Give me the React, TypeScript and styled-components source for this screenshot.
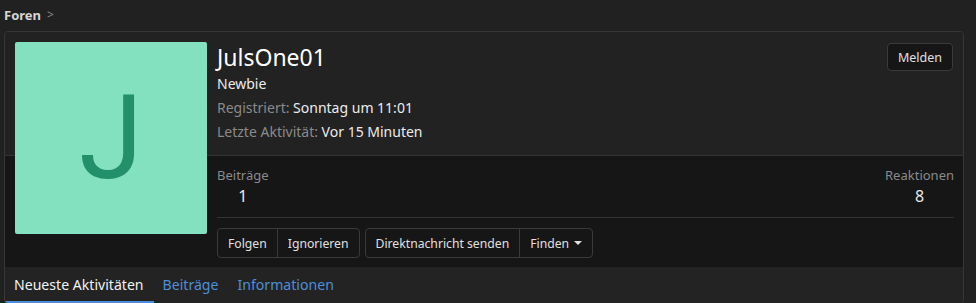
import React from "react";
import styled, { createGlobalStyle } from "styled-components";

const GlobalStyle = createGlobalStyle`
  body {
    margin: 0;
    background-color: #212121;
    font-family: "Noto Sans", "Liberation Sans", sans-serif;
    color: #dcdcdc;
  }
`;

interface Stat {
  label: string;
  value: string;
  align: "left" | "right";
}

const stats: Stat[] = [
  { label: "Beiträge", value: "1", align: "left" },
  { label: "Reaktionen", value: "8", align: "right" },
];

const App: React.FC = () => {
  return (
    <>
      <GlobalStyle />
      <Breadcrumb>
        <Crumb>Foren</Crumb>
        <Chevron>&gt;</Chevron>
      </Breadcrumb>
      <Card>
        <Header>
          <TopBg />
          <BottomBg />
          <Avatar>J</Avatar>
          <TopContent>
            <Info>
              <UserName>JulsOne01</UserName>
              <UserTitle>Newbie</UserTitle>
              <InfoLine>
                <Muted>Registriert:</Muted> Sonntag um 11:01
              </InfoLine>
              <InfoLine>
                <Muted>Letzte Aktivität:</Muted> Vor 15 Minuten
              </InfoLine>
            </Info>
            <ReportButton>Melden</ReportButton>
          </TopContent>
          <BottomContent>
            <StatsRow>
              {stats.map((stat) => (
                <StatBox key={stat.label} $align={stat.align}>
                  <StatLabel>{stat.label}</StatLabel>
                  <StatValue>{stat.value}</StatValue>
                </StatBox>
              ))}
            </StatsRow>
            <Actions>
              <ButtonGroup>
                <GroupButton>Folgen</GroupButton>
                <GroupButton>Ignorieren</GroupButton>
              </ButtonGroup>
              <ButtonGroup>
                <GroupButton>Direktnachricht senden</GroupButton>
                <GroupButton>
                  Finden <Caret />
                </GroupButton>
              </ButtonGroup>
            </Actions>
          </BottomContent>
        </Header>
        <Tabs>
          <Tab $active>Neueste Aktivitäten</Tab>
          <Tab>Beiträge</Tab>
          <Tab>Informationen</Tab>
        </Tabs>
      </Card>
    </>
  );
};

export default App;

const Breadcrumb = styled.div`
  display: flex;
  align-items: center;
  gap: 6px;
  height: 31px;
  padding: 0 4px 2px;
  box-sizing: border-box;
`;

const Crumb = styled.span`
  font-size: 13px;
  font-weight: 700;
  color: #d6d6d6;
`;

const Chevron = styled.span`
  font-size: 12px;
  color: #8a8a8a;
`;

const Card = styled.div`
  margin: 0 12px 0 4px;
  border: 1px solid #363636;
  border-radius: 4px;
  overflow: hidden;
  background-color: #222222;
`;

const Header = styled.div`
  display: grid;
  grid-template-columns: 212px 1fr;
  grid-template-rows: auto auto;
`;

const TopBg = styled.div`
  grid-column: 1 / -1;
  grid-row: 1;
  background-color: #222222;
`;

const BottomBg = styled.div`
  grid-column: 1 / -1;
  grid-row: 2;
  background-color: #161616;
  border-top: 1px solid #333333;
`;

const Avatar = styled.div`
  grid-column: 1;
  grid-row: 1 / 3;
  align-self: start;
  z-index: 1;
  margin: 10px 0 0 10px;
  width: 192px;
  height: 192px;
  border-radius: 2px;
  background-color: #84e1c0;
  color: #22906a;
  font-family: Roboto, "Liberation Sans", sans-serif;
  font-size: 116px;
  line-height: 192px;
  text-align: center;
`;

const TopContent = styled.div`
  grid-column: 2;
  grid-row: 1;
  display: flex;
  justify-content: space-between;
  align-items: flex-start;
  padding: 10px 10px 11px 0;
`;

const Info = styled.div`
  display: flex;
  flex-direction: column;
`;

const UserName = styled.h1`
  margin: 0;
  font-size: 23px;
  font-weight: 400;
  line-height: 30px;
  color: #ffffff;
`;

const UserTitle = styled.div`
  font-size: 14px;
  line-height: 24px;
  color: #ececec;
`;

const InfoLine = styled.div`
  font-size: 14px;
  line-height: 24px;
  color: #ececec;
`;

const Muted = styled.span`
  color: #8a8a8a;
`;

const ReportButton = styled.button`
  margin-top: 1px;
  height: 28px;
  padding: 0 10px;
  background-color: #161616;
  border: 1px solid #3a3a3a;
  border-radius: 4px;
  color: #e0e0e0;
  font-family: inherit;
  font-size: 12.5px;
`;

const BottomContent = styled.div`
  grid-column: 2;
  grid-row: 2;
  padding: 11px 9px 9px 0;
`;

const StatsRow = styled.div`
  display: flex;
  justify-content: space-between;
  padding-bottom: 9px;
  border-bottom: 1px solid #333333;
`;

const StatBox = styled.div<{ $align: "left" | "right" }>`
  display: flex;
  flex-direction: column;
  align-items: ${(p) => (p.$align === "left" ? "flex-start" : "flex-end")};
`;

const StatLabel = styled.div`
  font-size: 13px;
  line-height: 18px;
  color: #8a8a8a;
`;

const StatValue = styled.div`
  align-self: stretch;
  text-align: center;
  font-size: 16px;
  line-height: 24px;
  color: #e8e8e8;
`;

const Actions = styled.div`
  display: flex;
  gap: 5px;
  margin-top: 10px;
`;

const ButtonGroup = styled.div`
  display: flex;
  height: 30px;
  border: 1px solid #3a3a3a;
  border-radius: 4px;
  box-sizing: border-box;
  overflow: hidden;
`;

const GroupButton = styled.button`
  display: flex;
  align-items: center;
  gap: 5px;
  padding: 0 10px;
  background: transparent;
  border: none;
  border-left: 1px solid #3a3a3a;
  color: #e0e0e0;
  font-family: inherit;
  font-size: 12.2px;

  &:first-child {
    border-left: none;
  }
`;

const Caret = styled.span`
  width: 0;
  height: 0;
  border-left: 4px solid transparent;
  border-right: 4px solid transparent;
  border-top: 4px solid #e0e0e0;
`;

const Tabs = styled.div`
  display: flex;
  height: 36px;
  background-color: #232323;
`;

const Tab = styled.div<{ $active?: boolean }>`
  display: flex;
  align-items: center;
  padding: 0 10px 0 9px;
  font-size: 14.1px;
  color: ${(p) => (p.$active ? "#f2f2f2" : "#4d8fd9")};
  border-bottom: 2px solid ${(p) => (p.$active ? "#4d8fd9" : "transparent")};
`;
